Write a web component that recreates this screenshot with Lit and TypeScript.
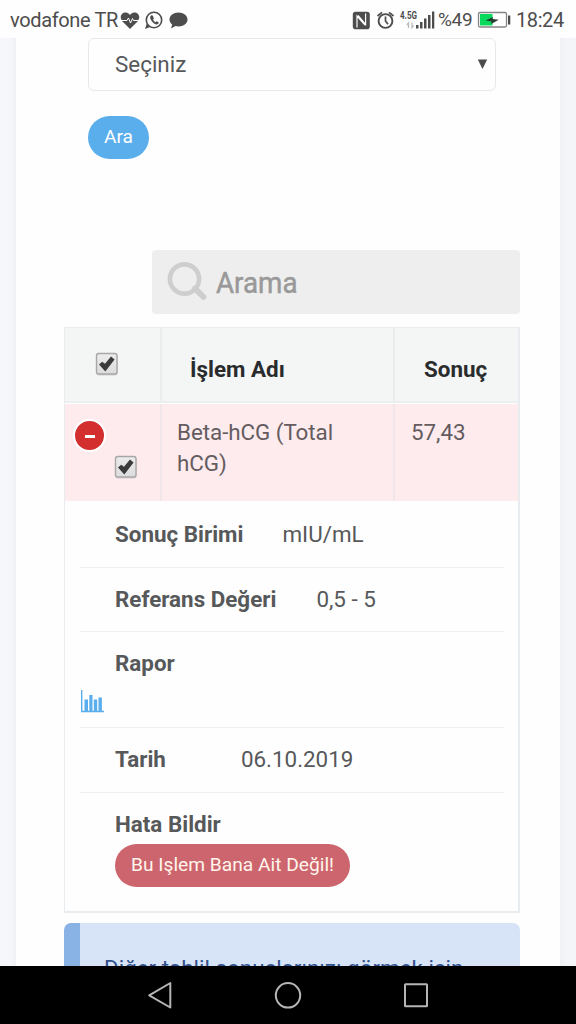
import { LitElement, html, css } from "lit";
import { customElement } from "lit/decorators.js";

@customElement("status-bar")
class StatusBar extends LitElement {
  static styles = css`
    :host { display: flex; height: 38px; box-sizing: border-box; padding: 0 12px 0 10px; background: #fefefe; color: #4d4d4d; font: 20px/38px Roboto, sans-serif; justify-content: space-between; }
    .group { display: flex; align-items: center; height: 39px; white-space: nowrap; }
    .carrier { width: 110px; letter-spacing: -0.35px; }
    .pct { width: 37px; font-size: 19px; letter-spacing: -0.35px; height: 38px; line-height: 37px; }
    .time { width: 48px; letter-spacing: -0.4px; height: 38px; line-height: 38px; }
    svg { display: block; flex: none; }
    .net { font: bold 10px/10px "Roboto", sans-serif; }
  `;
  render() {
    return html`
      <div class="group">
        <span class="carrier">vodafone TR</span>
        <svg width="70" height="38" viewBox="120 0 70 38">
          <path d="M130 28 L122 20 C119 15 122 11.5 125.500 11.500 C128 11.500 129.500 13 130 14 C130.500 13 132 11.500 134.500 11.500 C138 11.500 141 15 138 20Z" fill="#4d4d4d" />
          <path d="M121 19.500 h6 l1.500-2.500 2 5 2-4.500 1 2 h5.500" fill="none" stroke="#fefefe" stroke-width="1" />
          <circle cx="154" cy="19" r="7.700" fill="none" stroke="#4d4d4d" stroke-width="1.600" />
          <path d="M145 28 l1.700-5.500 3.500 3.500z" fill="#4d4d4d" />
          <path d="M151 14.500 c-1.500 1-1 3.500.8 5.800 2 2.600 4.400 4 6.200 2.700 1-.7.8-1.500.2-2l-1.500-.8-1.200 1c-1-.4-2-1.600-2.400-2.600l.8-1-.8-2.300c-.4-1-1.400-1.200-2.100-.800z" fill="#4d4d4d" />
          <path d="M178.500 11.500 c5 0 9 3 9 7 s-4 7-9 7 c-1 0-2-.1-3-.4 l-4.500 2.500 1.200-4.100 c-1.700-1.300-2.700-3-2.700-5 0-4 4-7 9-7z" fill="#4d4d4d" />
        </svg>
      </div>
      <div class="group">
        <svg width="87" height="38" viewBox="351 0 87 38">
          <rect x="352.800" y="10.800" width="17" height="17.400" rx="2.800" fill="#4d4d4d" />
          <path d="M357 26.500 V15 L365 24 M365.600 12.500 V23.500 L358 14.500" stroke="#fefefe" stroke-width="1.200" fill="none" />
          <circle cx="385.500" cy="20" r="6.900" fill="none" stroke="#4d4d4d" stroke-width="1.900" />
          <path d="M385.500 15.500 v4.500 l2.500 3.300 M377.500 15 l4.500-3.700 M389 11.300 l4.500 3.700" fill="none" stroke="#4d4d4d" stroke-width="1.700" />
          <text class="net" x="400" y="18" fill="#4d4d4d" textLength="17" lengthAdjust="spacingAndGlyphs">4.5G</text>
          <path d="M408.500 27 v-5 l-1.500 2 M412 21.500 v5 l1.500-2" fill="none" stroke="#bbb" stroke-width="1.300" />
          <path d="M416 24h2.500v3.500h-2.500z M420 21h2.500v6.500h-2.500z M424 17.500h2.500v10h-2.500z M428 14h2.500v13.500h-2.500z M432 10.500h2.300v17h-2.300z" fill="#4d4d4d" />
        </svg>
        <span class="pct">%49</span>
        <svg width="41" height="38" viewBox="475 0 41 38">
          <rect x="478.500" y="11.500" width="28" height="14.500" rx="1.500" fill="#fff" stroke="#858585" stroke-width="1.300" />
          <path d="M480 13h12.500v11.500h-12.500z" fill="#08d95d" />
          <path d="M485.500 19.500 l7.500-3.500 -.3 2 6 .8 -7.500 4.200 .3-2.500z" fill="#263c2f" />
          <path d="M508 14.500h2.300v9h-2.300z" fill="#4d4d4d" />
        </svg>
        <span class="time">18:24</span>
      </div>`;
  }
}

@customElement("check-box")
class CheckBox extends LitElement {
  static styles = css`:host { display: block; width: 24px; height: 25px; } svg { display: block; }`;
  render() {
    return html`<svg width="24" height="25" viewBox="0 0 24 25">
      <defs><linearGradient id="g" x2="0" y2="1"><stop stop-color="#ececec" /><stop offset="1" stop-color="#dcdcdc" /></linearGradient></defs>
      <rect x="1.500" y="2" width="21" height="21.500" rx="2.500" fill="#d4d0d0" />
      <rect x="1.500" y="1.500" width="20.500" height="20.500" rx="2.200" fill="url(#g)" stroke="#a8a6a6" stroke-width="1.400" />
      <path d="M4 12.500 l3.200-2.800 2.800 2 6-7.200 3.600 3 -9.300 12z" fill="#3b3b3b" />
    </svg>`;
  }
}

@customElement("nav-bar")
class NavBar extends LitElement {
  static styles = css`:host { display: block; height: 58px; background: #000; } svg { display: block; }`;
  render() {
    return html`<svg width="576" height="58" viewBox="0 966 576 58" fill="none" stroke="#b5b5b5" stroke-width="2" stroke-linejoin="round">
      <path d="M170.300 983 V1007.500 L149.200 995.300Z" />
      <circle cx="288" cy="995.300" r="12.200" />
      <rect x="405" y="984.300" width="22" height="22" rx=".5" />
    </svg>`;
  }
}

@customElement("app-root")
class AppRoot extends LitElement {
  static styles = css`
    :host { display: flex; flex-direction: column; width: 576px; height: 1024px; overflow: hidden; font: 22.4px/32px Roboto, sans-serif; color: #56585a; }
    * { box-sizing: border-box; }
    .page { flex: 1; min-height: 0; overflow: hidden; padding: 0 16px; background: linear-gradient(90deg, #f5f7fb 0 10px, #f0f1f4 16px, #f0f1f4 560px, #f4f5f9 567px); }
    .panel { background: #fefefe; padding: 0 40px 0 48px; height: 928px; display: flex; flex-direction: column; overflow: hidden; }
    .select { flex: none; margin: 0 24px; height: 53px; border: 1.500px solid #e7e8e9; border-radius: 6px; display: flex; align-items: center; justify-content: space-between; padding: 0 7px 2px 26px; }
    .pill { display: flex; align-items: center; justify-content: center; height: 43px; border-radius: 22px; font-size: 19.200px; color: #fff; white-space: nowrap; }
    .go { flex: none; margin: 25px 0 0 24px; width: 61px; background: #5aaeec; padding-bottom: 1px; }
    .search { flex: none; margin: 91px 0 0 88px; height: 64px; background: #eee; border-radius: 4px; display: flex; align-items: center; padding-left: 14px; font-size: 30px; color: #999; }
    .ph { transform: scaleX(0.925); transform-origin: left; margin: 1px 0 0 8px; -webkit-text-stroke: 0.5px #999; }
    .table { flex: none; margin-top: 13px; height: 586px; border: 1px solid #e9ecee; border-right-width: 2px; border-bottom-width: 2px; }
    .row { display: grid; grid-template-columns: 95px 233px 1fr; }
    .head { height: 75px; background: #f4f5f5; border-bottom: 2px solid #ebefef; font-weight: 700; color: #292b2d; }
    .head > *, .data > * { border-left: 2px solid #e9edee; }
    .data > * { border-left-color: #f1e6e9; }
    .row > :first-child { border-left: 0; }
    .head > div { padding: 25px 0 0 28px; }
    .head > div:last-child { padding-left: 29px; }
    .head > .chk { padding: 24px 0 0 30px; }
    .data { height: 97px; margin-top: 1px; background: #feebee; color: #645c5f; }
    .data > div { padding: 13px 0 0 15px; line-height: 31px; letter-spacing: -0.05px; }
    .data > div:last-child { padding-left: 16px; }
    .data > .ctl { padding: 15px 0 0 8px; display: flex; }
    .minus { width: 33px; height: 33px; border: 2px solid #fff; border-radius: 50%; background: #d32f2f; display: flex; align-items: center; justify-content: center; }
    .minus i { width: 10px; height: 2.500px; background: #fff; margin-top: 2px; }
    .ctl check-box { margin: 36px 0 0 8px; }
    .details { padding: 1px 14px 0 15px; }
    .item { border-bottom: 1.500px solid #f0f0f0; height: 64.500px; padding: 15px 0 0 35px; display: flex; }
    .item:first-child { height: 65.500px; padding-top: 16px; }
    .item b { font-weight: 700; white-space: nowrap; }
    .birim { margin-left: 39px; } .ref { margin-left: 40px; } .tarih { margin-left: 75px; }
    .report { height: 96px; padding: 15px 0 0; flex-direction: column; }
    .report b { margin-left: 35px; }
    .report svg { margin-top: 10px; display: block; }
    .last { border: 0; display: block; padding-top: 15px; }
    .mine { width: 235px; margin-top: 4px; background: #cd656e; color: #fff5ec; }
    .alert { flex: none; height: 100px; margin-top: 10px; padding: 29px 0 0 24px; border-left: 16px solid #89b3e5; border-radius: 7px; background: #d7e4f7; color: #31508b; white-space: nowrap; }
  `;
  render() {
    return html`
      <status-bar></status-bar>
      <main class="page">
        <div class="panel">
          <div class="select"><span>Seçiniz</span>
            <svg width="11" height="12" viewBox="0 0 11 12"><path d="M.8 1.500h9.400L5.500 11z" fill="#4b4b4b" /></svg>
          </div>
          <div class="pill go">Ara</div>
          <div class="search">
            <svg width="42" height="42" viewBox="0 0 42 42" fill="none" stroke="#cecece"><circle cx="18.500" cy="18" r="14.600" stroke-width="4.600" /><path d="M29 27.500 L37.500 36" stroke-width="6" stroke-linecap="round" /></svg>
            <span class="ph">Arama</span>
          </div>
          <div class="table">
            <div class="row head"><div class="chk"><check-box></check-box></div><div>İşlem Adı</div><div>Sonuç</div></div>
            <div class="row data">
              <div class="ctl"><span class="minus"><i></i></span><check-box></check-box></div>
              <div>Beta-hCG (Total<br />hCG)</div><div>57,43</div>
            </div>
            <div class="details">
              <div class="item"><b>Sonuç Birimi</b><span class="birim">mIU/mL</span></div>
              <div class="item"><b>Referans Değeri</b><span class="ref">0,5 - 5</span></div>
              <div class="item report"><b>Rapor</b>
                <svg width="24" height="24" viewBox="0 0 24 24"><path d="M1.700 1v21.500H24" fill="none" stroke="#5aaeec" stroke-width="1.400" /><path d="M4.500 10.500h3.500v11.500h-3.500z M9.300 6h3.200v16h-3.200z M13.800 10.500h3.400v11.500h-3.400z M18.500 8.500h3.400V22h-3.400z" fill="#5aaeec" /></svg>
              </div>
              <div class="item"><b>Tarih</b><span class="tarih">06.10.2019</span></div>
              <div class="item last"><b>Hata Bildir</b><div class="pill mine">Bu Işlem Bana Ait Değil!</div></div>
            </div>
          </div>
          <div class="alert">Diğer tahlil sonuçlarınızı görmek için</div>
        </div>
      </main>
      <nav-bar></nav-bar>`;
  }
}
